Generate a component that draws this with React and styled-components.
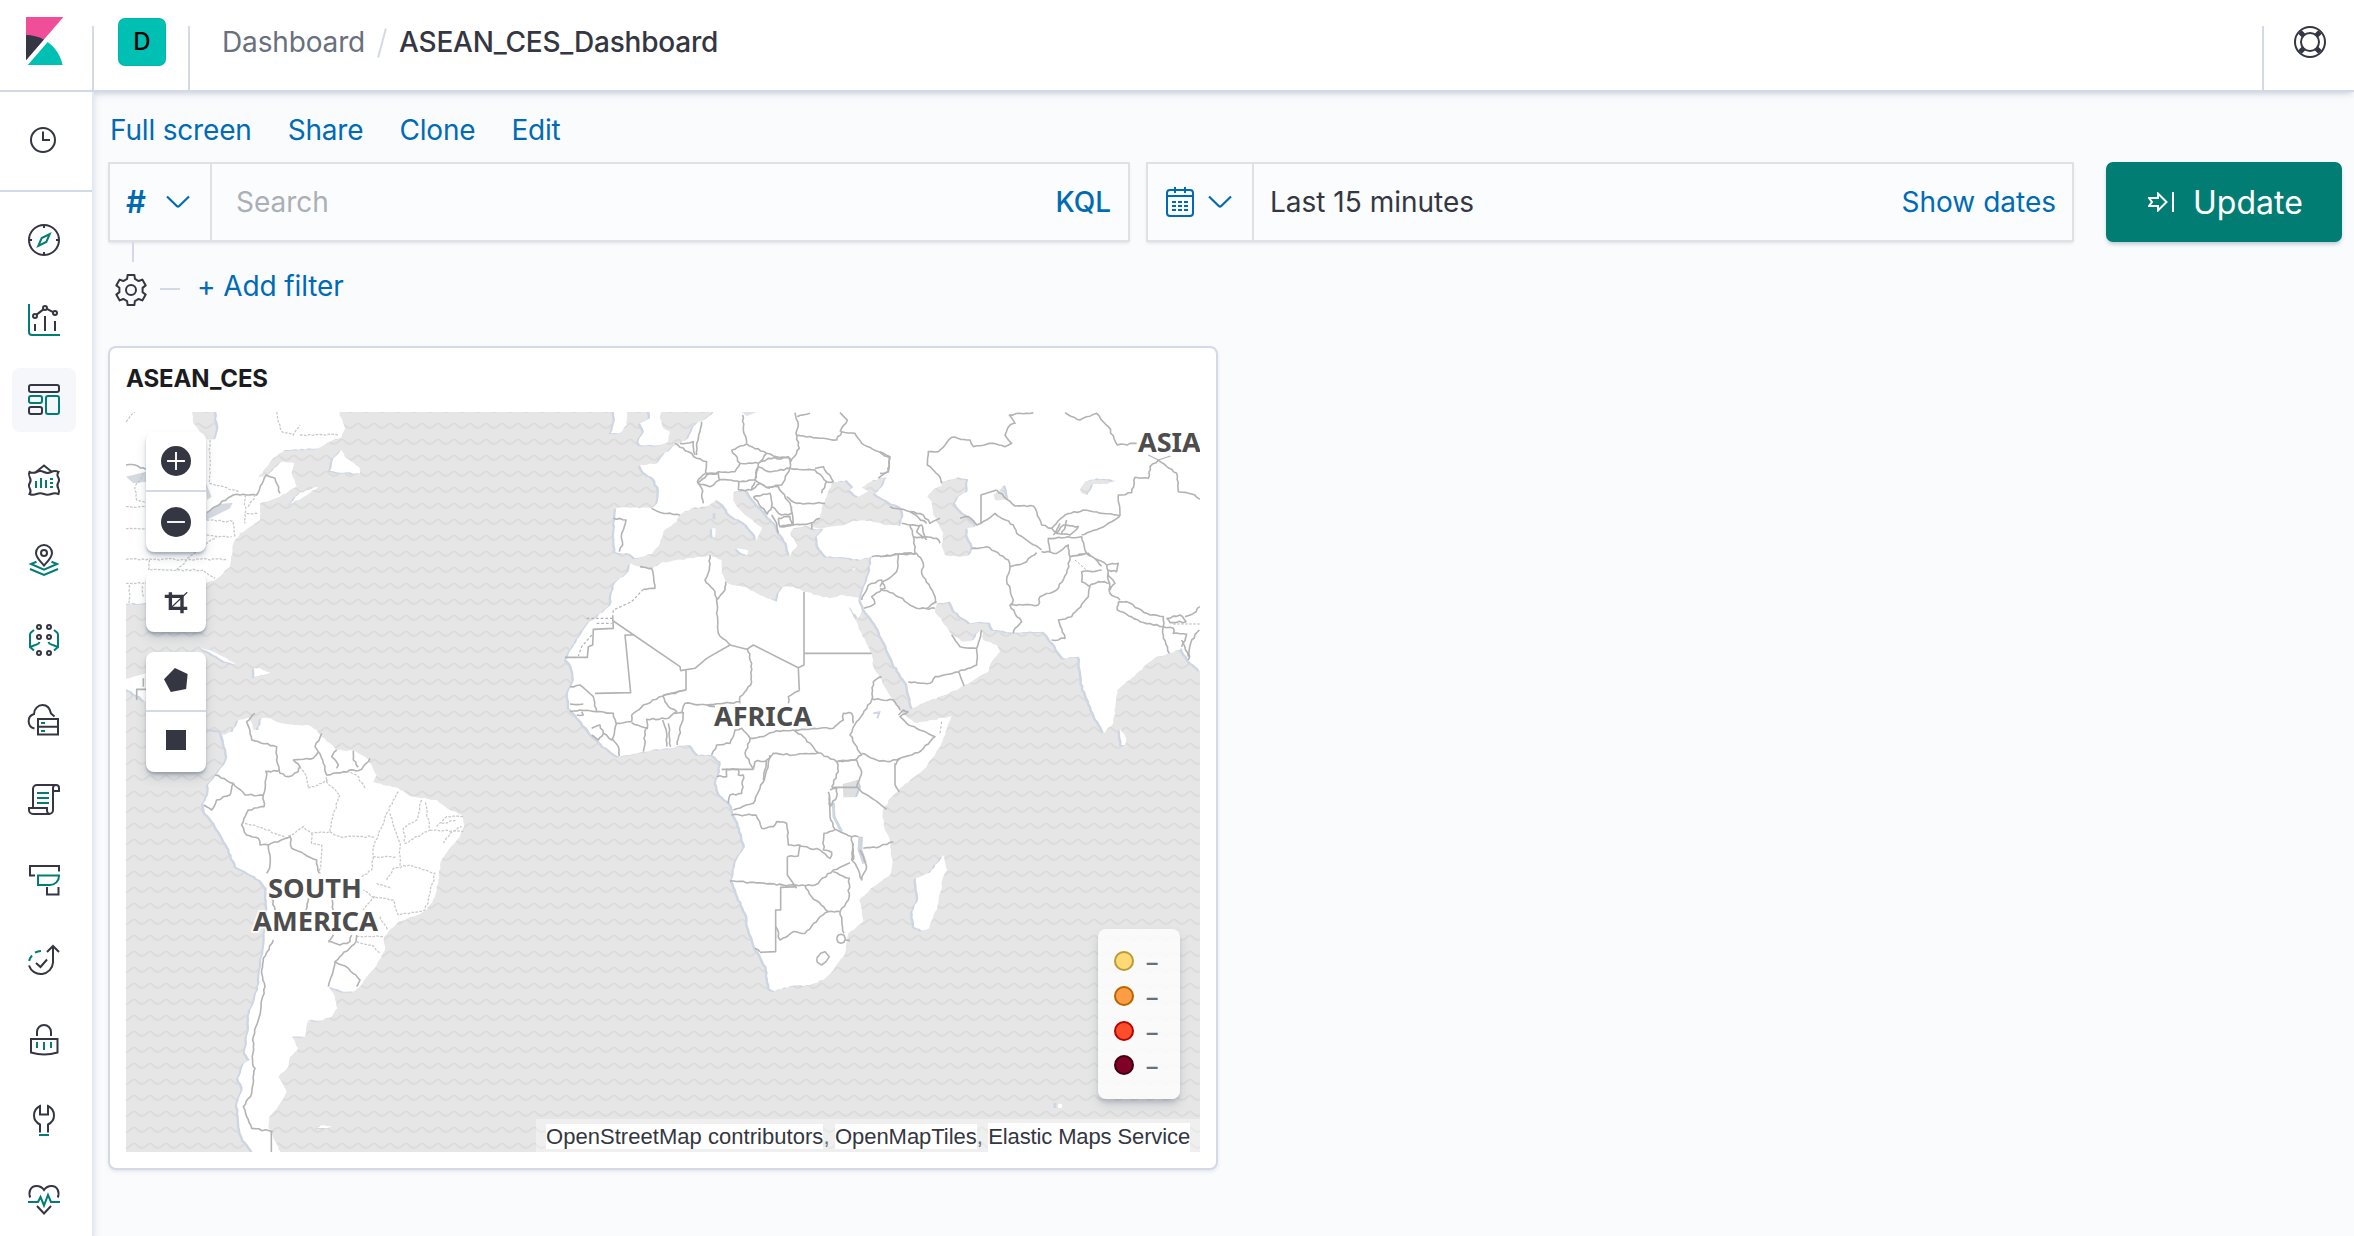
import React from 'react';
import styled, { createGlobalStyle } from 'styled-components';

const GlobalStyle = createGlobalStyle`
  *, *::before, *::after { box-sizing: border-box; }
  body {
    margin: 0;
    background: #fafbfd;
    color: #343741;
    font-family: Inter, "Liberation Sans", sans-serif;
    font-size: 28px;
    line-height: 1.5;
    overflow: hidden;
  }
`;

const C = {
  ink: '#343741',
  subdued: '#69707d',
  line: '#d3dae6',
  link: '#006bb4',
  teal: '#017d73',
};

/* ---------- layout ---------- */

const Page = styled.div`
  width: 2354px;
  height: 1236px;
  display: flex;
  flex-direction: column;
  overflow: hidden;
`;

const Header = styled.header`
  height: 92px;
  flex: none;
  display: flex;
  align-items: flex-end;
  background: #fff;
  border-bottom: 2px solid ${C.line};
  box-shadow: 0 2px 5px -1px rgba(152, 162, 179, 0.3), 0 3px 8px -2px rgba(152, 162, 179, 0.3);
  position: relative;
  z-index: 2;
`;

const LogoCell = styled.div`
  width: 92px;
  height: 90px;
  padding: 17px 0 0 20px;
`;

const SpaceCell = styled.div`
  width: 98px;
  height: 64px;
  border-left: 2px solid ${C.line};
  border-right: 2px solid ${C.line};
  padding-left: 24px;
`;

const Avatar = styled.div`
  width: 48px;
  height: 48px;
  margin-top: -8px;
  border-radius: 7px;
  background: #00bfb3;
  box-shadow: inset 0 0 0 1px rgba(0, 0, 0, 0.05);
  color: #000;
  font-size: 24px;
  font-weight: 500;
  line-height: 48px;
  text-align: center;
`;

const Crumbs = styled.nav`
  flex: 1;
  height: 64px;
  padding: 1px 0 0 32px;
  display: flex;
  align-items: flex-start;
  line-height: 30px;
`;

const Crumb = styled.span`
  color: ${(p) => (p.$current ? C.ink : C.subdued)};
  font-weight: ${(p) => (p.$current ? 500 : 400)};
  letter-spacing: ${(p) => p.$ls || 0}px;
  white-space: nowrap;
`;

const Slash = styled.i`
  width: 2px;
  height: 30px;
  margin: 1px 16px;
  background: ${C.line};
  transform: rotate(15deg);
`;

const HelpCell = styled.div`
  width: 92px;
  height: 64px;
  padding-left: 30px;
  border-left: 2px solid ${C.line};
`;

const Body = styled.div`
  flex: 1;
  display: flex;
  min-height: 0;
`;

const Sidebar = styled.aside`
  width: 92px;
  flex: none;
  position: relative;
  z-index: 3;
  background: #fff;
  box-shadow: 2px 0 0 #e4e9f1, 3px 3px 6px rgba(152, 162, 179, 0.25);
`;

const Recent = styled.div`
  height: 100px;
  padding: 32px 0 0 27px;
  border-bottom: 2px solid ${C.line};
`;

const NavList = styled.div`
  padding: 16px 0 0 12px;
  display: flex;
  flex-direction: column;
  gap: 16px;
`;

const NavButton = styled.div`
  width: 64px;
  height: 64px;
  flex: none;
  display: grid;
  place-items: center;
  border-radius: 8px;
  background: ${(p) => (p.$active ? '#f5f7fa' : 'transparent')};
`;

const Main = styled.main`
  flex: 1;
  min-width: 0;
  padding: 16px 12px 0 16px;
`;

const Menu = styled.nav`
  display: flex;
  gap: 36px;
  padding-left: 2px;
  height: 54px;
`;

const MenuLink = styled.a`
  color: ${C.link};
  letter-spacing: -0.18px;
  line-height: 44px;
  white-space: nowrap;
`;

const QueryRow = styled.div`
  display: flex;
  height: 80px;
`;

const Box = styled.div`
  width: ${(p) => p.$w}px;
  margin-right: ${(p) => p.$mr}px;
  height: 80px;
  flex: none;
  display: flex;
  align-items: center;
  border: 2px solid #dfe2e5;
  background: #fbfcfd;
  box-shadow: 0 2px 3px -1px rgba(152, 162, 179, 0.3);
`;

const BoxPrefix = styled.div`
  width: ${(p) => p.$w}px;
  height: 76px;
  padding-left: ${(p) => p.$pl}px;
  gap: ${(p) => p.$gap || 0}px;
  border-right: 2px solid #dfe2e5;
  display: flex;
  align-items: center;
  color: ${C.link};
`;

const Hash = styled.span`
  font-size: 31px;
  font-weight: 600;
  width: 40px;
`;

const Field = styled.span`
  flex: 1;
  padding-left: ${(p) => p.$pl}px;
  color: ${(p) => (p.$muted ? '#abb0b7' : C.ink)};
`;

const Action = styled.span`
  color: ${C.link};
  padding-right: ${(p) => p.$pr}px;
  font-weight: ${(p) => p.$w || 400};
`;

const UpdateButton = styled.div`
  width: 236px;
  height: 80px;
  padding-left: 42px;
  display: flex;
  align-items: center;
  gap: 19px;
  border-radius: 7px;
  background: ${C.teal};
  color: #fff;
  font-size: 32px;
  box-shadow: 0 3px 4px -1px rgba(54, 97, 126, 0.35);
`;

const UpdateLabel = styled.span`
  padding-top: 2px;
`;

const FilterRow = styled.div`
  display: flex;
  height: 104px;
  padding-left: 7px;
`;

const GearColumn = styled.div`
  width: 35px;
  display: flex;
  flex-direction: column;
  align-items: flex-start;
  gap: 12px;
`;

const Stem = styled.i`
  width: 2px;
  height: 20px;
  margin-left: 17px;
  background: ${C.line};
`;

const Dash = styled.i`
  width: 20px;
  height: 2px;
  margin: 46px 17px 0 10px;
  background: ${C.line};
`;

const AddFilter = styled.a`
  color: ${C.link};
  padding-top: 23px;
  letter-spacing: -0.1px;
`;

const Panel = styled.section`
  width: 1110px;
  height: 824px;
  padding: 0 16px;
  background: #fff;
  border: 2px solid ${C.line};
  border-radius: 8px;
  box-shadow: 0 2px 4px -1px rgba(152, 162, 179, 0.3);
`;

const PanelTitle = styled.h2`
  margin: 0;
  height: 64px;
  padding-top: 13px;
  font-size: 24px;
  line-height: 36px;
  font-weight: 700;
  letter-spacing: -0.12px;
  color: #1a1c21;
`;

/* ---------- map ---------- */

const MapArea = styled.div`
  position: relative;
  width: 1074px;
  height: 740px;
  overflow: hidden;
`;

const MapControls = styled.div`
  position: absolute;
  left: 20px;
  top: 20px;
  display: flex;
  flex-direction: column;
  gap: 20px;
`;

const ControlGroup = styled.div`
  width: 60px;
  background: #fff;
  border-radius: 8px;
  box-shadow: 0 6px 12px -1px rgba(65, 78, 101, 0.2), 0 4px 4px -1px rgba(65, 78, 101, 0.2),
    0 2px 2px 0 rgba(65, 78, 101, 0.2);
`;

const ControlButton = styled.div`
  height: ${(p) => p.$h || 60}px;
  padding-bottom: ${(p) => p.$lift || 0}px;
  display: grid;
  place-items: center;
  & + & { border-top: 2px solid ${C.line}; }
`;

const Legend = styled.div`
  position: absolute;
  right: 20px;
  top: 517px;
  width: 82px;
  height: 170px;
  padding: 15px 0 0 16px;
  background: rgba(255, 255, 255, 0.8);
  border-radius: 8px;
  box-shadow: 0 6px 12px -1px rgba(65, 78, 101, 0.2), 0 4px 4px -1px rgba(65, 78, 101, 0.2);
`;

const LegendRow = styled.div`
  height: 34.7px;
  display: flex;
  align-items: center;
  gap: 12px;
  color: ${C.subdued};
`;

const LegendLabel = styled.span`
  padding-top: 4px;
  font-family: "Liberation Sans", Arial, sans-serif;
  font-size: 22px;
  font-weight: 700;
  line-height: 30px;
`;

const LegendDot = styled.i`
  width: 20px;
  height: 20px;
  border-radius: 50%;
  border: 2px solid ${(p) => p.$edge};
  background: ${(p) => p.$fill};
`;

const Attribution = styled.div`
  position: absolute;
  right: 0;
  bottom: 0;
  height: 33px;
  width: 664px;
  padding: 4px 10px 0 10px;
  display: flex;
  justify-content: space-between;
  background: rgba(255, 255, 255, 0.35);
  font-family: "Liberation Sans", Arial, sans-serif;
  font-size: 22px;
  line-height: 27px;
  color: ${C.subdued};
`;

const Credit = styled.span`
  background: #fff;
  color: ${C.ink};
  letter-spacing: ${(p) => p.$ls || 0}px;
  white-space: nowrap;
`;

/* Breaks long straight runs into short uneven steps, as coastlines and rivers have. */
function trace(points, { close = false, amp = 2.6 } = {}) {
  const pts = points.trim().split(/\s+/).map((s) => s.split(',').map(Number));
  if (close) pts.push(pts[0]);
  let d = `M${pts[0][0]} ${pts[0][1]}`;
  for (let i = 1; i < pts.length; i += 1) {
    const [ax, ay] = pts[i - 1];
    const [bx, by] = pts[i];
    const len = Math.hypot(bx - ax, by - ay);
    const n = amp ? Math.max(1, Math.round(len / 10)) : 1;
    for (let k = 1; k <= n; k += 1) {
      const t = k / n;
      const h = Math.sin((ax + k * 17.3) * 12.9898 + (ay + by) * 78.233) * 43758.5453;
      const j = k === n ? 0 : (h - Math.floor(h) - 0.5) * 2 * amp;
      const x = ax + (bx - ax) * t - ((by - ay) / (len || 1)) * j;
      const y = ay + (by - ay) * t + ((bx - ax) / (len || 1)) * j;
      d += `L${x.toFixed(1)} ${y.toFixed(1)}`;
    }
  }
  return close ? `${d}Z` : d;
}

const coast = (list) => list.map((s) => trace(s, { close: true, amp: 2.2 })).join('');
const lines = (text, amp) =>
  text.split(';').filter((s) => s.trim()).map((s) => trace(s, { amp })).join('');

const OLD_WORLD = coast([
  '466,30 440,55 415,65 400,80 385,115 345,135 310,165 290,190 240,195 250,215 280,235 297,270 292,310 275,325 230,322 168,325 166,350 162,410 166,457 210,462 225,475 275,462 300,430 310,395 350,365 358,345 395,325 435,320 470,300 490,315 510,345 560,375 585,405 590,422 606,384 570,355 540,330 520,300 522,275 560,270 580,300 620,345 645,370 658,400 680,430 690,468 712,435 690,400 700,385 740,378 790,388 770,410 775,440 800,470 850,472 900,480 935,470 928,520 912,560 902,600 912,628 950,680 980,740 1000,790 1020,820 1040,850 1058,925 1090,910 1190,870 1215,855 1285,815 1295,785 1320,755 1310,735 1270,720 1265,690 1250,700 1240,720 1210,725 1175,705 1160,680 1125,635 1130,610 1170,605 1185,635 1230,670 1260,665 1290,668 1300,690 1360,698 1450,695 1480,730 1510,775 1557,770 1565,850 1595,930 1632,1000 1660,970 1672,870 1730,820 1790,770 1830,760 1865,745 1885,780 1922,815 1922,30',
  '795,300 815,250 860,240 880,262 868,270 895,290 925,272 905,262 940,240 980,232 965,262 945,280 985,305 1025,325 1030,350 1020,378 980,376 930,362 880,362 850,376 800,382 765,388 745,378 780,355 785,325',
  '1145,245 1195,232 1225,238 1222,275 1195,290 1185,310 1210,340 1250,370 1245,380 1222,385 1222,405 1238,440 1228,465 1200,470 1155,465 1145,440 1150,400 1120,345 1115,305 1102,290 1120,268 1145,258',
  '1300,285 1335,255 1345,300 1305,300',
  '1560,270 1575,245 1610,235 1670,242 1640,252 1600,252 1582,285 1565,280',
]);

const AFRICA = coast([
  '212,490 205,515 165,550 154,585 152,615 112,650 88,665 58,710 32,750 18,780 35,800 42,840 24,880 27,925 60,960 95,1005 130,1040 178,1070 250,1055 320,1045 390,1035 415,1065 455,1065 482,1085 480,1115 468,1150 480,1185 510,1210 525,1250 540,1285 555,1340 530,1380 515,1440 535,1490 558,1540 570,1600 590,1650 620,1700 628,1765 645,1773 690,1758 750,1755 790,1740 820,1710 855,1660 865,1600 910,1565 905,1530 898,1500 940,1460 990,1425 997,1390 990,1320 972,1280 968,1235 990,1195 1020,1165 1100,1100 1140,1040 1175,948 1120,960 1070,970 1045,955 1015,925 985,880 965,840 940,800 935,760 905,700 880,650 866,620 893,655 908,628 900,595 850,585 810,595 770,585 735,575 700,560 670,560 655,580 650,605 620,595 590,580 555,560 520,555 497,545 485,520 485,480 450,465 400,475 350,480 300,490 275,505 240,500',
]);

const ISLANDS = coast([
  '265,30 270,55 240,70 252,95 235,125 240,135 300,135 325,125 330,95 310,85 300,55 305,30',
  '160,30 165,60 152,100 180,98 200,75 200,30',
  '1150,1365 1162,1410 1150,1430 1135,1510 1108,1585 1085,1592 1062,1580 1057,1535 1075,1495 1068,1435 1110,1418',
  '1680,985 1698,1015 1695,1035 1684,1035',
  '530,446 565,452 562,466 545,460',
  '457,385 466,385 464,412 458,412',
  '870,506 888,502 882,510',
]);

const SOUTH_AMERICA = coast([
  '175,120 210,115 222,150 235,150 245,115 270,115 300,128 345,135 385,135 410,150 425,170 450,190 470,210 520,212 555,230 575,255 590,285 580,305 610,315 655,325 685,345 725,355 770,360 800,385 845,405 852,440 840,470 805,510 782,545 775,600 765,650 740,690 700,710 655,725 625,755 612,770 615,810 590,855 560,890 540,920 520,935 490,935 460,925 447,920 465,950 472,985 455,1010 430,1020 385,1022 375,1070 335,1070 355,1105 330,1130 325,1160 295,1190 320,1235 300,1270 268,1310 265,1340 280,1375 305,1425 225,1425 190,1380 178,1340 172,1270 188,1225 174,1195 192,1150 210,1140 195,1120 204,1060 209,1000 234,930 244,850 254,770 260,700 260,625 240,600 168,560 143,500 103,430 76,400 70,370 84,345 84,315 108,285 132,255 142,230 132,190 127,165 158,155',
  '410,1345 425,1335 455,1338 440,1345',
]);

const NORTH_AMERICA = coast([
  '60,200 275,200 280,250 290,262 320,298 345,298 355,265 345,200 710,200 735,265 725,290 690,305 655,325 555,330 515,360 475,412 500,405 545,365 582,370 575,400 590,440 540,470 480,490 480,540 450,560 420,580 400,610 390,680 345,720 300,740 200,790 60,790',
  '724,330 700,355 690,392 730,398 780,400 778,382 735,350',
  '655,440 600,458 568,492 605,475',
  '300,925 330,930 370,950 408,972 375,965 340,945',
  '462,985 480,985 512,998 490,1005 462,1010',
  '60,1020 138,1000 138,1085 110,1065 60,1035',
]);

const EUROPE_BORDERS = lines(`275,325 310,340 360,345;160,355 198,360 185,400 188,435 178,455;
345,130 385,155 410,175 440,185 437,220 412,245 425,265 430,310;360,130 400,125 405,165;
425,65 420,95 410,130 410,165;412,250 440,225 475,220 478,240 450,260 412,250;548,45 550,90 560,130;
515,150 560,132 620,160 595,190 540,190 515,150;437,220 525,215 540,190;475,238 540,245 585,240 595,190;
595,190 625,175 690,175 690,205 625,215 595,200;620,160 650,170 685,170 692,185 718,145 708,100 715,75 705,38;
585,240 595,205;690,205 665,255 620,262 585,240;535,270 575,270 585,245;535,270 535,245;570,270 600,250 630,265;
580,290 630,280 635,320 622,342 580,290;630,262 655,260 690,310 695,340 665,345 635,320;690,205 765,210 800,245 785,280;
680,290 710,310 795,310;765,205 790,200 820,245 800,245;695,320 700,375 750,370 780,355;
655,355 690,350 695,375 660,380 655,355;635,345 650,370 655,400;660,380 700,375;755,370 755,388;
710,105 830,120 845,95 885,100 905,130 990,175 985,215 955,235;750,40 712,50;840,38 862,60 840,95;
935,470 1000,465 1070,460;925,555 965,540 975,565 935,590 945,610 912,625;925,555 905,600`);

const AFRICA_BORDERS = lines(`450,465 448,510 435,540 465,575 470,605;497,545 495,570 470,600 475,700 510,735;
240,500 275,505 285,565 250,568;562,745 575,790 572,855 540,890 540,910;718,872 685,890 685,910;
30,860 60,855 100,890 110,935;30,912 70,912;30,935 60,930 110,935 160,940 168,970;50,945 70,945 65,935;
95,985 120,975 130,1000 115,1020 95,1005;130,1000 155,1020 170,970;178,1068 175,1040 158,1018;168,970 215,965;258,985 250,1055;
215,965 215,945 250,915 308,888 325,920 350,935 325,955 260,958 262,985 215,968;308,960 320,1000 320,1040;325,970 332,1040;
345,940 370,938 365,970 352,1035;365,940 375,910 440,915 465,920;308,888 375,870;440,915 540,905;
455,1065 470,1035 510,1030 525,990 545,985 570,1015 555,1060 580,1108;570,1015 610,1010 650,992 700,990 730,1010 775,1058 700,1065 640,1060 620,1080 610,1140;
580,1108 585,1085 620,1082;705,990 780,985 820,985 850,960 850,940 875,940 880,970;
775,1058 830,1085 885,1080 905,1065 870,1005 890,965 935,900 940,845 965,830;935,897 1000,900 1020,930`);

const AFRICA_STRAIGHT = lines(`158,650 160,685 100,688 98,735 85,740 82,772 15,772;
160,663 360,800 362,812 405,805 440,775 510,735 560,748 580,735 715,803 718,872;225,705 195,705 212,878 105,880;
378,812 378,870 310,885;732,575 732,795 715,803;732,760 935,760;485,1108 580,1108`, 0);

const SOUTH_AFRICA_BORDERS = lines(`605,160 650,180 690,185 720,175 775,158 825,110 745,75 720,50 745,35;
720,175 707,195;705,255 718,275;530,185 590,180 605,215 590,260 600,270 680,328;530,185 535,215 515,260;
330,165 315,230 300,265 280,310 220,330;170,230 200,230 200,208 235,208 235,225 250,225 245,280 210,285 205,310;
215,345 288,345 305,385 340,380 350,365 380,370 385,435 420,435 415,468 382,470;
420,438 480,450 510,475 515,457 490,450 492,400 525,388 575,410 580,480;570,488 520,510 465,555 350,555 210,543;
510,270 530,265 530,290 510,320 505,275;508,290 510,350 525,388;575,410 595,410;610,445 650,443 700,425;
580,430 575,480 590,500 605,540 620,500 600,450;300,755 285,745;347,680 360,720 400,695 435,700 480,650 505,635 455,590 435,555;
505,635 540,635 565,600 568,535 520,515;540,635 552,700;556,720 570,722`);

const SOUTH_AFRICA_STRAIGHT = lines(
  '382,470 382,525 410,565;410,560 362,562 362,630 347,630 347,755 300,757;515,262 590,262;705,190 705,255;530,716 534,706 543,703 552,706 556,716 552,727 543,730 534,727 530,716;470,775 482,760 495,755 508,770 498,785 485,795 472,787 470,775',
  0,
);

const ASIA_BORDERS = lines(`185,250 175,225 142,195 145,155 175,155 215,112 270,120 280,140 330,130 375,140 395,130 375,105 390,75 405,70 388,45 460,38;
555,38 600,60 650,40 685,80 712,135 770,130;835,180 810,200 805,235 765,232 755,278 715,285 720,348;
835,180 890,220 895,275 935,282 960,298;720,348 610,330 555,345 515,385;720,348 660,385 605,405;
350,270 405,318 460,318 485,375 515,385;303,370 345,340 400,375 410,400 485,450;
485,455 510,455 505,415 605,410 620,460 570,470 565,435 530,460 485,455;515,385 530,400 570,405 595,380 550,375 530,400;
540,370 520,405;560,360 545,405;275,445 320,440 385,480 390,500 430,490 470,458;
390,500 380,540 400,600 390,615 475,615 480,590 530,570 560,520 570,470;390,615 405,640 425,665 405,685 400,700;
515,720 555,715 535,660 575,650 625,590 630,560 605,545 605,515 665,510;620,460 680,495 715,490 710,515 685,510;
680,495 685,540 690,580 720,600;625,560 655,545 690,550;570,470 625,460 665,498;682,520 705,550 690,570;
715,605 740,605 810,645 850,650 850,680 780,665 712,630 715,605;860,655 900,645 918,665 870,668 860,655;
850,680 850,715 868,760;850,680 880,685 880,700 920,703 905,740;925,780 935,720 958,690;915,650 940,640 960,620;905,720 925,770;
0,470 55,462 110,460;110,460 130,490 125,520 165,590 165,610;100,410 105,460;30,320 90,335 130,345 150,370 180,355;
90,375 125,375 135,410 170,415 180,430;65,370 90,375 100,410 130,415;120,375 110,395 140,420;90,335 140,370;
240,355 265,350 290,375 303,370;55,465 50,515 5,550 0,560;0,565 40,580 110,625 165,625;140,625 170,605;
215,705 240,740 290,745 305,690;290,745 290,795 235,815 165,830 150,850 85,845;235,815 252,858;
55,945 70,930 85,935;0,155 30,170 25,215 0,220`);

const SA_BORDERS = lines(`225,100 200,125 215,180 290,200 290,240 300,280 325,290 355,275 360,260 340,240 400,235 415,215 405,200 425,160;
255,275 300,272;260,275 250,345 195,345 160,310 105,285;160,310 150,345 110,360 95,390 72,375;
250,345 252,380 205,390 185,435 200,465 235,475 240,495 265,495;265,495 330,470 335,505 410,540 418,580;
265,495 270,555 260,580;415,215 430,250 440,285 490,275 545,268 570,235;470,210 455,230 475,255 470,265;
520,212 520,240 535,262;280,780 250,835 245,880 255,920 235,1020 220,1070 218,1150 225,1165 215,1240 190,1280 200,1310 215,1345 278,1355;
445,785 480,795 510,785 515,765;445,785 460,765;530,765 528,785 465,845 445,920;465,845 505,865 540,900 530,920;275,655 285,690;385,655 378,690;455,655 460,690`);

const SA_STATES = lines(`195,430 250,445 320,475 370,440 395,460 450,455 455,420 480,345 440,305 440,285;
360,260 380,290 385,325 445,300;395,460 395,490 425,495 420,580;450,455 480,470 585,470;
655,335 620,400 605,440 580,500 580,530 650,530;630,400 645,450 660,490 660,560;725,360 710,420 670,445 675,490 750,450 735,365;
750,450 850,455;770,440 800,410 850,410;785,430 830,420;790,490 810,460 845,440;500,275 530,285 555,325;580,530 575,570 545,590;
620,600 640,565 690,555 765,580 745,660 735,690 655,705 640,660 575,650 550,630;590,610 635,625;585,650 550,690;600,710 622,750;
530,770 610,770;530,785 575,795 600,820`);

const NA_BORDERS = lines('78,375 105,375 138,388;320,518 345,500 400,465 470,465 500,405 525,415 540,460');
const NA_STATES = lines(`330,300 328,430 370,440 415,455;530,216 545,275 580,285 600,255;600,285 715,285;320,540 400,545 405,590;
435,465 435,550;440,520 475,520;445,500 470,460;78,500 138,500;78,567 138,567;78,658 380,658;130,400 105,440 110,480 138,490;
78,730 145,730;150,690 310,690 345,715;320,585 395,590;230,690 300,620 350,590;145,690 150,655;88,790 88,735;130,770 125,735;78,245 105,216`);

function LandShape({ d, rule }) {
  return (
    <>
      <path d={d} fill="#cdd6e2" fillRule={rule} transform="translate(-7 3)" />
      <path d={d} fill="#fff" fillRule={rule} />
    </>
  );
}

function WorldMap() {
  const border = { fill: 'none', stroke: '#b3b3b3', strokeWidth: 4.8, strokeLinejoin: 'round' };
  const state = { fill: 'none', stroke: '#c8c8c8', strokeWidth: 3.8, strokeDasharray: '8 4' };
  return (
    <svg width="1074" height="740" viewBox="126 412 1074 740" style={{ display: 'block' }}>
      <defs>
        <pattern id="waves" width="16" height="16" x="6" y="419" patternUnits="userSpaceOnUse">
          <rect width="16" height="16" fill="#e6e6e6" />
          <path d="M0 4.5C3 5 4.5 9 8 9s5-4 8-4.5" fill="none" stroke="#dcdcdc" strokeWidth="2" />
        </pattern>
        <pattern id="wavesSouth" width="16" height="16" x="6" y="787" patternUnits="userSpaceOnUse">
          <rect width="16" height="16" fill="#e6e6e6" />
          <path d="M0 4.5C3 5 4.5 9 8 9s5-4 8-4.5" fill="none" stroke="#dcdcdc" strokeWidth="2" />
        </pattern>
      </defs>
      <rect x="126" y="412" width="1074" height="370" fill="url(#waves)" />
      <rect x="126" y="782" width="1074" height="370" fill="url(#wavesSouth)" />

      <g transform="translate(100 340) scale(0.33333)">
        <LandShape d={NORTH_AMERICA} />
        <path d="M78 410L138 395V425L100 430ZM318 430L335 470L322 480ZM318 520L360 492L398 488L390 505L340 530L318 540Z" fill="#d5dae0" />
        <path d={NA_BORDERS} {...border} />
        <path d={NA_STATES} {...state} />
        <path d="M110 1080V1048H138M130 1040V1015" {...border} />
      </g>

      <g transform="translate(180 680) scale(0.33333)">
        <LandShape d={SOUTH_AMERICA} />
        <path d="M80 150L118 155L125 180" fill="none" stroke="#cdd6e2" strokeWidth="6" />
        <path d={SA_STATES} {...state} />
        <path d={SA_BORDERS} {...border} />
        <path d="M274 1355V1420" {...border} />
      </g>

      <g transform="translate(560 400) scale(0.33333)">
        <LandShape d={AFRICA} />
        <LandShape d={OLD_WORLD} rule="evenodd" />
        <LandShape d={ISLANDS} />
        <path d="M462 340V358" stroke="#cdd6e2" strokeWidth="8" />
        <path d="M545 36L590 36L560 48Z" fill="#dfe3e8" />
        <path d={EUROPE_BORDERS} {...border} />
        <path d={AFRICA_BORDERS} {...border} />
        <path d={AFRICA_STRAIGHT} {...border} />
        <path d="M250 568L215 605L160 630L158 655M80 655H158M110 670H155M95 705L65 740L55 768" {...border} strokeWidth="3.6" strokeDasharray="8 6" />
        <path d="M940 940L958 937L952 955" fill="none" stroke="#cdd6e2" strokeWidth="6" />
        <g transform="translate(300 900)">
          <path d="M548 252L592 240L600 262L588 292H550Z" fill="#dedfe1" />
          <path d="M592 240L600 262L588 290" fill="none" stroke="#c6d0dc" strokeWidth="6" />
          <path d="M520 308L522 350L545 395" fill="none" stroke="#cdd6e2" strokeWidth="9" />
          <path d="M602 410L600 450L614 490" fill="none" stroke="#cfd5dc" strokeWidth="14" />
          <path d={SOUTH_AFRICA_BORDERS} {...border} />
          <path d={SOUTH_AFRICA_STRAIGHT} {...border} />
          <path d="M845 65L840 100" {...border} strokeWidth="3" strokeDasharray="7 7" />
        </g>
        <g transform="translate(960 0)">
          <path d={ASIA_BORDERS} {...border} />
          <path d="M303 370V285L350 270" {...border} />
          <path d="M585 480L625 515M880 672H960" {...border} strokeWidth="3" strokeDasharray="7 5" />
          <path d="M805 165L835 180L872 168" {...border} strokeWidth="3.5" />
        </g>
      </g>
      <path d="M1055 1103v5" stroke="#cdd6e2" strokeWidth="3" />
      <circle cx="1060" cy="1106" r="2.3" fill="#fff" />

      <g
        fill="#4d4d4d"
        stroke="#fff"
        strokeOpacity=".8"
        strokeWidth="4"
        strokeLinejoin="round"
        paintOrder="stroke"
        fontFamily="'Noto Sans', 'Open Sans', sans-serif"
        fontWeight="700"
        fontSize="27"
      >
        <text x="714" y="726" textLength="98" lengthAdjust="spacingAndGlyphs">AFRICA</text>
        <text x="1138" y="452">ASIA</text>
        <text x="268" y="897.5" textLength="94" lengthAdjust="spacingAndGlyphs">SOUTH</text>
        <text x="253" y="931" textLength="125" lengthAdjust="spacingAndGlyphs">AMERICA</text>
      </g>
    </svg>
  );
}

/* ---------- icons ---------- */

const IconSvg = styled.svg`
  display: block;
  flex: none;
  overflow: visible;
  fill: none;
  stroke: ${C.ink};
  stroke-width: 2;
  .accent { stroke: ${C.teal}; }
`;

function Icon({ size = 32, children, ...rest }) {
  return (
    <IconSvg width={size} height={size} viewBox="0 0 32 32" {...rest}>
      {children}
    </IconSvg>
  );
}

const NAV = [
  { id: 'discover', art: (
    <>
      <circle cx="16" cy="16" r="15" />
      <path d="M16 1v3M16 28v3M1 16h3M28 16h3" />
      <path className="accent" d="M21.7 10.2L18.3 17.9L10.3 21.8L13.7 14.1Z" />
    </>
  ) },
  { id: 'visualize', art: (
    <>
      <path className="accent" d="M1 0v28a3 3 0 0 0 3 3h28" />
      <path d="M7 20v7M17 12v15M27 17v10M8.6 10.6L15.4 5.4M19 4.9L25 8.1" />
      <circle cx="7" cy="12" r="2" /><circle cx="17" cy="4" r="2" /><circle cx="27" cy="9" r="2" />
    </>
  ) },
  { id: 'dashboard', active: true, art: (
    <>
      <rect x="1" y="1" width="30" height="7" rx="2" />
      <rect className="accent" x="1" y="12" width="13" height="7" rx="2" />
      <rect x="1" y="23" width="13" height="7" rx="2" />
      <rect className="accent" x="18" y="12" width="13" height="18" rx="2" />
    </>
  ) },
  { id: 'canvas', art: (
    <>
      <path d="M8 8L16 1.5L24 8" />
      <path d="M1.5 7.8q3.6 2 7.2 .2t7.2 0t7.2 0t7.4 -.2q-2 2.700-.3 5.500t0 5.500t0 5.500t.3 5.700q-3.600-1.500-7.300 0t-7.300 0t-7.300 0t-7.100 0q2-2.700 .3-5.600t0-5.500t0-5.500t-.3-5.600z" />
      <path className="accent" d="M8 17v7M13 14v10M18 16v8M22 15h3M22 19h3M22 23h3" />
    </>
  ) },
  { id: 'maps', art: (
    <>
      <path className="accent" d="M8.5 17.8L3 20l13 5.7L29 20l-5.5-2.2M2 25l14 6 14-6" />
      <path d="M16 21.5C12 17 8 13.5 8 9a8 8 0 0 1 16 0c0 4.5-4 8-8 12.5z" />
      <circle cx="16" cy="9" r="3" />
    </>
  ) },
  { id: 'ml', art: (
    <>
      {[11, 21].map((x) => [3, 13, 29].map((y) => <circle key={`${x}-${y}`} cx={x} cy={y} r="2" />))}
      <path className="accent" d="M6 6L3 8.5Q2 9.3 2 11v12l4 3.5M2 23l7.5-2.8Q11 19.5 11.5 18M26 6l3 2.5q1 .8 1 2.5v12l-4 3.5M30 23l-7.5-2.8Q21 19.5 20.5 18" />
    </>
  ) },
  { id: 'infra', art: (
    <>
      <path d="M6.5 24.5A7.5 7.5 0 0 1 6 10C6 5 10 1 14.5 1S22 4.5 23 9.5l3.5 3" />
      <path d="M10 15h20v15.5H10zM10 22.7h20" />
      <path className="accent" d="M13 19h4M13 27h4" />
    </>
  ) },
  { id: 'logs', art: (
    <>
      <path d="M5 24V5a4 4 0 0 1 4-4h19a3 3 0 0 1 3 3v3h-6V4a3 3 0 0 1 3-3M25 7v19a4 4 0 0 1-4 4H5a4 4 0 0 1-4-4v-2h18v2q0 4 3 4" />
      <path className="accent" d="M9 9h12M9 14h12M9 19h12" />
    </>
  ) },
  { id: 'apm', art: (
    <>
      <path d="M7 11.5H2V2h29v5.5M19 23v7.5h11.5V23" />
      <path className="accent" d="M10 11.5h21v.5a9 9 0 0 1-9 9H10z" />
    </>
  ) },
  { id: 'uptime', art: (
    <>
      <path d="M8 19l4.5 4L19 15.5M1 21.5A12.3 12.3 0 0 0 25 18.5V2M19 8l6-6 6 6" />
      <path className="accent" d="M1.2 17A12 12 0 0 1 4 11.5M7 8.7A12 12 0 0 1 13 7" />
    </>
  ) },
  { id: 'siem', art: (
    <>
      <path d="M9 12V8a7 7 0 0 1 14 0v4M3 15h26.5v13.5q-13.2 4-26.5 0z" />
      <path className="accent" d="M9 18v6M16 18v8M23 18v6" />
    </>
  ) },
  { id: 'devtools', art: (
    <>
      <path d="M12 28.5V20.5C8 18.5 6 15.5 6 11.5C6 7.5 8 4 12 2v8.5h8V2c4 2 6 5.5 6 9.5c0 4-2 7-6 9v8" />
      <path className="accent" d="M11 31h10" />
    </>
  ) },
  { id: 'monitoring', art: (
    <>
      <path d="M2.3 13.5C0 8 2.5 2 8.5 2c3 0 5.8 1.5 7.5 4c1.7-2.5 4.5-4 7.5-4c6 0 8.5 6 6.2 11.5M9 22l7 7.5L23 22" />
      <path className="accent" d="M0 18h10l2.500-5 3.500 8.500L20 11l3 7h9" />
    </>
  ) },
];

function KibanaLogo() {
  return (
    <svg width="48" height="48" viewBox="0 0 32 32" style={{ display: 'block' }}>
      <path fill="#f04e98" d="M4 0v28.789L28.935.017 29 0z" />
      <path fill="#343741" d="M4 12v16.789l11.906-13.738A24.721 24.721 0 0 0 4 12" />
      <path fill="#00bfb3" d="M18.479 16.664L5.195 31.991h23.191c-1.252-6.292-4.883-11.719-9.908-15.327" />
    </svg>
  );
}

const Chevron = () => (
  <svg width="24" height="14" viewBox="0 0 24 14" fill="none" stroke={C.link} strokeWidth="2.2">
    <path d="M1 1.5L11 11.2Q12 12 13 11.2L23 1.5" />
  </svg>
);

const Calendar = () => (
  <svg width="28" height="30" viewBox="0 0 28 30" fill="none" stroke={C.link} strokeWidth="2">
    <rect x="1" y="3" width="26" height="26" rx="3" />
    <path d="M1 9h26M9 0v6M19 0v6" />
    <path d="M6 15h16M6 19h16M6 23h16" strokeDasharray="4 2" />
  </svg>
);

const GEAR_PATH = (() => {
  const pts = [];
  for (let i = 0; i < 6; i += 1) {
    const base = (i * Math.PI) / 3 - Math.PI / 2;
    [[-0.22, 15.4], [0.22, 15.4], [0.34, 11.8], [0.71, 11.8]].forEach(([a, r]) => {
      pts.push(`${(16 + r * Math.cos(base + a)).toFixed(2)} ${(16 + r * Math.sin(base + a)).toFixed(2)}`);
    });
  }
  return `M${pts.join('L')}Z`;
})();

const LEGEND = [
  { fill: '#fed976', edge: '#b99a33' },
  { fill: '#fd9d43', edge: '#b66402' },
  { fill: '#fc4e2a', edge: '#b50202' },
  { fill: '#800026', edge: '#3d0012' },
];

export default function App() {
  return (
    <Page>
      <GlobalStyle />
      <Header>
        <LogoCell><KibanaLogo /></LogoCell>
        <SpaceCell><Avatar>D</Avatar></SpaceCell>
        <Crumbs>
          <Crumb $ls={-0.15}>Dashboard</Crumb>
          <Slash />
          <Crumb $current $ls={-0.22}>ASEAN_CES_Dashboard</Crumb>
        </Crumbs>
        <HelpCell>
          <Icon>
            <circle cx="16" cy="16" r="15" />
            <circle cx="16" cy="16" r="9" />
            <path strokeWidth="5" d="M6 6l3.5 3.5M26 6l-3.5 3.5M6 26l3.5-3.5M26 26l-3.5-3.5" />
          </Icon>
        </HelpCell>
      </Header>
      <Body>
        <Sidebar>
          <Recent>
            <Icon>
              <circle cx="16" cy="16" r="12" />
              <path d="M16 7.5V16h7" />
            </Icon>
          </Recent>
          <NavList>
            {NAV.map((n) => (
              <NavButton key={n.id} $active={n.active}><Icon>{n.art}</Icon></NavButton>
            ))}
          </NavList>
        </Sidebar>
        <Main>
          <Menu>
            <MenuLink>Full screen</MenuLink>
            <MenuLink>Share</MenuLink>
            <MenuLink>Clone</MenuLink>
            <MenuLink>Edit</MenuLink>
          </Menu>
          <QueryRow>
            <Box $w={1022} $mr={16}>
              <BoxPrefix $w={102} $pl={16}><Hash>#</Hash><Chevron /></BoxPrefix>
              <Field $pl={24} $muted>Search</Field>
              <Action $pr={17} $w={500}>KQL</Action>
            </Box>
            <Box $w={928} $mr={32}>
              <BoxPrefix $w={106} $pl={18} $gap={14}><Calendar /><Chevron /></BoxPrefix>
              <Field $pl={16}>Last 15 minutes</Field>
              <Action $pr={16}>Show dates</Action>
            </Box>
            <UpdateButton>
              <svg width="26" height="20" viewBox="0 0 26 20" fill="none" stroke="#fff" strokeWidth="2">
                <path d="M1 6h9V1.5L18.500 10L10 18.500V14H1l3-4zM25 0v20" />
              </svg>
              <UpdateLabel>Update</UpdateLabel>
            </UpdateButton>
          </QueryRow>
          <FilterRow>
            <GearColumn>
              <Stem />
              <Icon>
                <path d={GEAR_PATH} strokeLinejoin="round" />
                <circle cx="16" cy="16" r="5" />
              </Icon>
            </GearColumn>
            <Dash />
            <AddFilter>+ Add filter</AddFilter>
          </FilterRow>
          <Panel>
            <PanelTitle>ASEAN_CES</PanelTitle>
            <MapArea>
              <WorldMap />
              <MapControls>
                <ControlGroup>
                  <ControlButton $h={58}>
                    <Icon size={30}>
                      <circle cx="16" cy="16" r="16" fill={C.ink} stroke="none" />
                      <path d="M16 6.500v19M6.500 16h19" stroke="#fff" />
                    </Icon>
                  </ControlButton>
                  <ControlButton $h={62}>
                    <Icon size={30}>
                      <circle cx="16" cy="16" r="16" fill={C.ink} stroke="none" />
                      <path d="M6.500 16h19" stroke="#fff" />
                    </Icon>
                  </ControlButton>
                </ControlGroup>
                <ControlGroup>
                  <ControlButton>
                    <Icon size={24}>
                      <path strokeWidth="4.5" d="M1 8.5H24V31M8.5 3V24.5H31" />
                      <path strokeWidth="1.5" d="M9 24L31 3" />
                    </Icon>
                  </ControlButton>
                </ControlGroup>
                <ControlGroup>
                  <ControlButton $h={58} $lift={2}>
                    <Icon size={24}>
                      <path fill={C.ink} stroke="none" d="M14.5 0L31.5 8L29.5 28L9 32L0 15z" />
                    </Icon>
                  </ControlButton>
                  <ControlButton $h={62} $lift={4}>
                    <Icon size={20}><path fill={C.ink} stroke="none" d="M0 0h32v32H0z" /></Icon>
                  </ControlButton>
                </ControlGroup>
              </MapControls>
              <Legend>
                {LEGEND.map((l) => (
                  <LegendRow key={l.fill}>
                    <LegendDot $fill={l.fill} $edge={l.edge} />
                    <LegendLabel>–</LegendLabel>
                  </LegendRow>
                ))}
              </Legend>
              <Attribution>
                <span><Credit $ls={0.04}>OpenStreetMap contributors</Credit>,</span>
                <span><Credit $ls={-0.05}>OpenMapTiles</Credit>,</span>
                <Credit $ls={-0.12}>Elastic Maps Service</Credit>
              </Attribution>
            </MapArea>
          </Panel>
        </Main>
      </Body>
    </Page>
  );
}
